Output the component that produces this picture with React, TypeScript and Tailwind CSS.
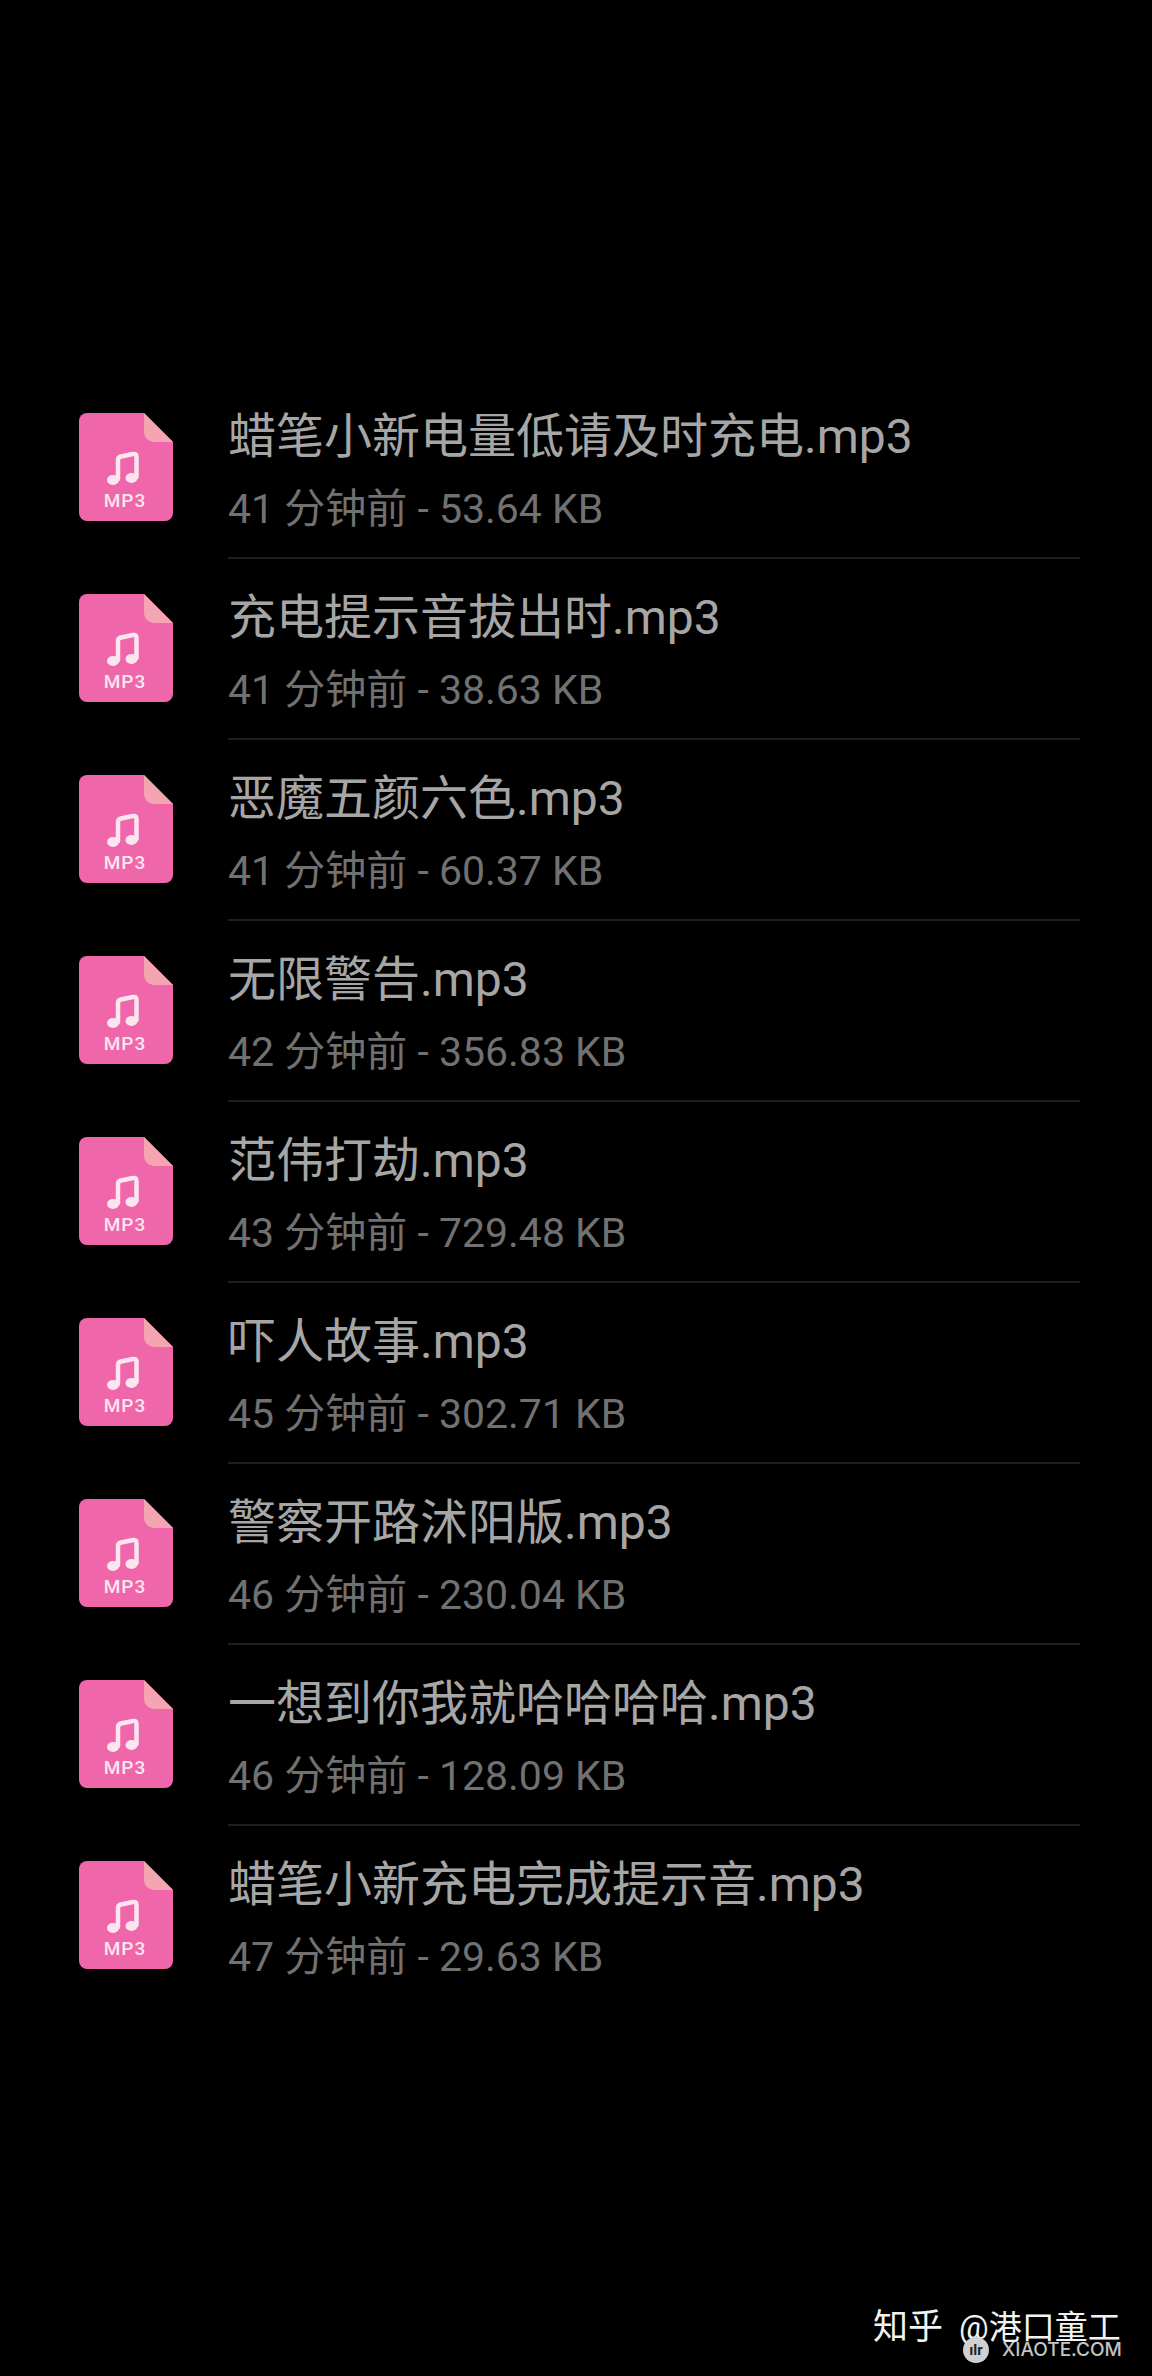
const files = [
  { name: '蜡笔小新电量低请及时充电.mp3', meta: '41 分钟前 - 53.64 KB' },
  { name: '充电提示音拔出时.mp3', meta: '41 分钟前 - 38.63 KB' },
  { name: '恶魔五颜六色.mp3', meta: '41 分钟前 - 60.37 KB' },
  { name: '无限警告.mp3', meta: '42 分钟前 - 356.83 KB' },
  { name: '范伟打劫.mp3', meta: '43 分钟前 - 729.48 KB' },
  { name: '吓人故事.mp3', meta: '45 分钟前 - 302.71 KB' },
  { name: '警察开路沭阳版.mp3', meta: '46 分钟前 - 230.04 KB' },
  { name: '一想到你我就哈哈哈哈.mp3', meta: '46 分钟前 - 128.09 KB' },
  { name: '蜡笔小新充电完成提示音.mp3', meta: '47 分钟前 - 29.63 KB' }
]

const Mp3Icon = () => (
  <svg width="94" height="108" viewBox="0 0 94 108" className="shrink-0">
    <path d="M8 0H65L94 29V100a8 8 0 0 1-8 8H8a8 8 0 0 1-8-8V8a8 8 0 0 1 8-8Z" fill="#ef66aa" />
    <path d="M65 0L94 29H75a10 10 0 0 1-10-10Z" fill="#f5a5b2" />
    <path
      d="M39 66V47c0-2 1-3 3-3.500l12-2.500c2.500-.5 3.500.5 3.500 3V64"
      fill="none"
      stroke="#fbe6f0"
      strokeWidth="4.500"
      strokeLinecap="round"
    />
    <ellipse cx="34" cy="67" rx="6" ry="5" fill="#fbe6f0" />
    <ellipse cx="52.500" cy="65" rx="6" ry="5" fill="#fbe6f0" />
    <text
      x="46"
      y="94"
      textAnchor="middle"
      fontSize="19"
      fontWeight="500"
      letterSpacing="1"
      fill="#fbe6f0"
      fontFamily="Roboto, sans-serif"
    >
      MP3
    </text>
  </svg>
)

const App = () => {
  return (
    <div className="relative h-[2376px] w-[1152px] overflow-hidden bg-black font-['Roboto','Noto_Sans_CJK_SC',sans-serif]">
      <div className="pt-[378px] pl-[79px] pr-[72px]">
        {files.map((file, index) => (
          <div key={index} className="flex h-[181px]">
            <div className="w-[149px] shrink-0 pt-[35px]">
              <Mp3Icon />
            </div>
            <div className={`flex-1 pt-[30px] ${index < files.length - 1 ? 'border-b-2 border-[#1e1e1e]' : ''}`}>
              <div className="text-[48px] leading-[58px] whitespace-nowrap text-[#a6a6a6]">{file.name}</div>
              <div className="mt-[20px] text-[41px] leading-[46px] whitespace-nowrap text-[#717171]">{file.meta}</div>
            </div>
          </div>
        ))}
      </div>

      {/* watermark */}
      <div className="absolute top-[2308px] left-[873px] flex items-baseline text-[#f2f2f2] whitespace-nowrap">
        <span className="text-[35px] leading-[40px]">知乎</span>
        <span className="ml-[16px] text-[33px] leading-[40px]">@港口童工</span>
      </div>
      <div className="absolute top-[2337px] left-[963px] flex items-center gap-[13px]">
        <div className="flex h-[26px] w-[26px] items-center justify-center rounded-full bg-[#d0d0d0] text-[15px] leading-none font-bold text-[#222]">
          ılr
        </div>
        <span className="font-['Inter',sans-serif] text-[19px] leading-[26px] font-medium text-[#c4c4c4]">
          XIAOTE.COM
        </span>
      </div>
    </div>
  )
}

export default App
